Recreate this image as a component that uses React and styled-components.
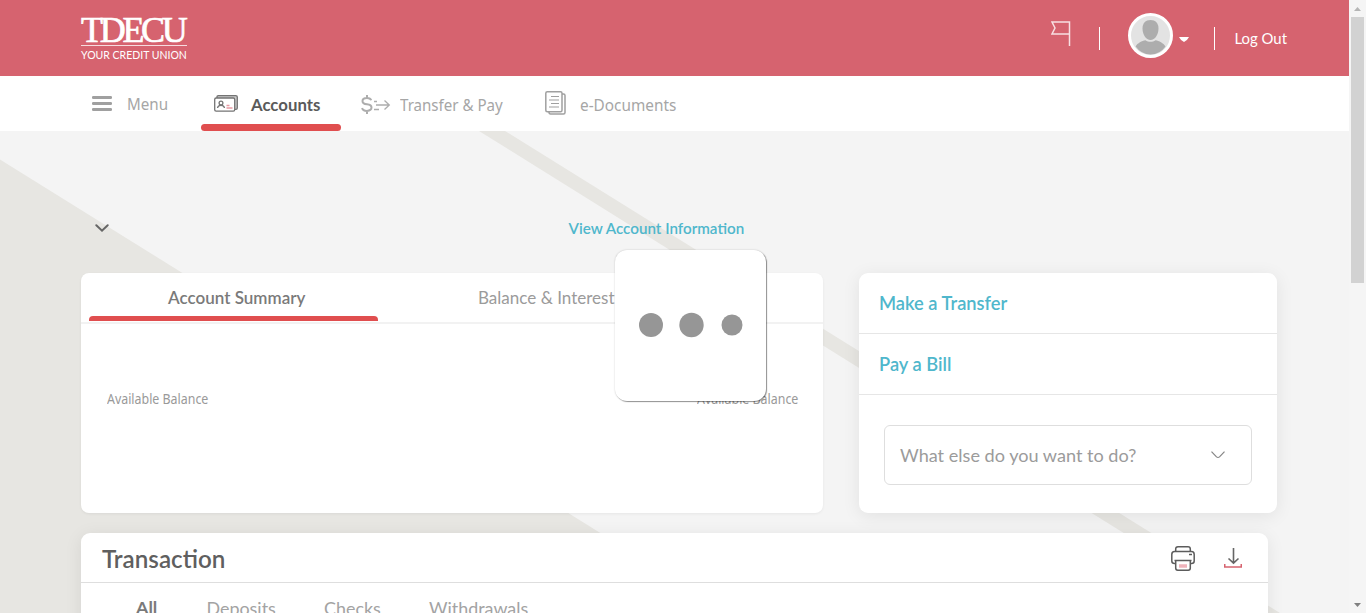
import React from 'react';
import styled, { createGlobalStyle } from 'styled-components';

const Global = createGlobalStyle`
  * { box-sizing: border-box; }
  html, body { margin: 0; height: 613px; overflow: hidden; }
  body { font-family: Lato, "Liberation Sans", sans-serif; color: #949494; background: #f4f4f4; }
  svg { display: block; flex: none; }
`;

const Screen = styled.div`display: flex; width: 1366px; height: 613px; overflow: hidden; background: #f4f4f4; position: relative;`;
const Page = styled.div`width: 1349px; height: 613px; overflow: hidden; position: relative; display: flex; flex-direction: column;`;
const Header = styled.header`height: 76px; flex: none; background: #d6636f; display: flex; justify-content: space-between; padding: 0 62px 0 81px; color: #fff;`;
const Logo = styled.div`width: 110px; padding-top: 13px;`;
const LogoMark = styled.div`
  font: 36px/34px "Liberation Serif", serif; height: 33px; letter-spacing: -3.3px; border-bottom: 1px solid #f6dcdf; width: 106px;
  display: flex; white-space: nowrap; -webkit-text-stroke: 0.7px #fff;
`;
const LogoText = styled.div`font-size: 10.5px; line-height: 13px; margin-top: 3px; white-space: nowrap;`;
const Tools = styled.div`display: flex; align-items: flex-start;`;
const Flag = styled.div`padding: 21px 28px 0 0;`;
const Rule = styled.div`width: 1px; height: 23px; margin-top: 27px; background: #fff;`;
const Avatar = styled.div`width: 45px; height: 45px; margin: 13px 6px 0 28px;`;
const Caret = styled.div`margin: 37px 25px 0 0;`;
const LogOut = styled.div`font-size: 14.9px; line-height: 20px; margin: 28px 0 0 19.5px; width: 52.5px; white-space: nowrap;`;

const Nav = styled.nav`height: 55px; flex: none; background: #fff; display: flex; padding-left: 92px;`;
const NavItem = styled.div`
  position: relative; display: flex; width: ${p => p.$w}px; height: 55px; padding-left: ${p => p.$pl || 0}px; color: ${p => (p.$active ? '#5a5a5a' : '#a6a6a6')};
  font: ${p => (p.$active ? 700 : 400)} ${p => p.$fs || 16.5}px/22px ${p => (p.$active ? 'Lato' : '"Noto Sans"')}, sans-serif;
`;
const NavIcon = styled.div`width: ${p => p.$w}px; padding-top: ${p => p.$top}px; flex: none;`;
const NavText = styled.span`margin-top: ${p => p.$top || 18}px; white-space: nowrap; transform-origin: 0 50%; transform: scaleX(${p => p.$sx || 1}); height: 22px;`;
const NavLine = styled.div`position: absolute; left: 0; bottom: 0; width: 140px; height: 7px; border-radius: 4px; background: #e04e4f;`;

const Content = styled.main`position: relative; flex: 1; overflow: hidden; padding-left: 81px;`;
const Backdrop = styled.svg`position: absolute; left: 0; top: 0;`;
const InfoRow = styled.div`position: relative; height: 142px; display: flex; padding: 86px 0 0 14px;`;
const InfoChevron = styled.div`width: 473.5px; padding-top: 7px;`;
const InfoLink = styled.a`font-size: 15.2px; font-weight: 600; line-height: 22px; color: #4fb7cc; white-space: nowrap;`;
const Cards = styled.div`position: relative; display: flex; gap: 36px; height: 240px;`;
const Summary = styled.section`width: 742px; background: #fff; border-radius: 8px; box-shadow: 0 1px 3px rgba(0,0,0,.06);`;
const Tabs = styled.div`display: flex; height: 51px; border-bottom: 2px solid #f2f2f2; padding-left: 8px;`;
const Tab = styled.div`
  width: ${p => p.$w}px; padding: 14px 0 0 ${p => p.$pl}px; display: flex; flex-direction: column; justify-content: space-between; font-size: 17.050px; line-height: 22px; font-weight: ${p => (p.$active ? 600 : 400)};
  color: ${p => (p.$active ? '#7a7a7a' : '#9b9b9b')}; white-space: nowrap;
`;
const TabLine = styled.div`height: 5px; margin: 0 0 1px -79px; width: 289px; border-radius: 4px 4px 0 0; background: #e04e4f;`;
const Balances = styled.div`display: flex; justify-content: space-between; padding: 64px 24px 0 26px; font: 14.5px/20px "Noto Sans", sans-serif; color: #999;`;
const BalanceLabel = styled.span`width: 102px; white-space: nowrap; transform-origin: 0 50%; transform: scaleX(.855);`;

const Actions = styled.aside`width: 418px; background: #fff; border-radius: 9px; box-shadow: 0 3px 18px rgba(0,0,0,.08);`;
const Action = styled.div`height: 61px; border-bottom: 1px solid #e6e6e6; padding: 18px 0 0 20px; font-size: 18.3px; line-height: 24px; font-weight: 600; color: #4fb7cc;`;
const Select = styled.div`
  margin: 30px 25px; height: 60px; border: 1px solid #dedede; border-radius: 6px; display: flex; align-items: center; justify-content: space-between;
  padding: 0 26px 0 15px; font-size: 18.1px; color: #9b9b9b;
`;
const Transactions = styled.section`position: relative; margin-top: 20px; width: 1187px; height: 200px; background: #fff; border-radius: 9px; box-shadow: 0 3px 18px rgba(0,0,0,.08);`;
const TransHead = styled.div`height: 50px; border-bottom: 1px solid #dedede; display: flex; align-items: flex-start; padding-left: 21px;`;
const Title = styled.h2`margin: 10px 0 0; font-size: 24.2px; line-height: 32px; font-weight: 600; color: #5f5f5f; width: 1069px;`;
const IconBox = styled.div`width: ${p => p.$w}px; padding-top: ${p => p.$top}px;`;
const Filters = styled.div`display: flex; padding: 13px 0 0 55px; font-size: 17.9px; line-height: 24px;`;
const Filter = styled.span`width: ${p => p.$w}px; white-space: nowrap; font-weight: ${p => (p.$active ? 700 : 400)}; color: ${p => (p.$active ? '#7a7a7a' : '#a3a3a3')}; margin-top: ${p => (p.$active ? -1 : 0)}px;`;

const Loader = styled.div`
  position: absolute; left: 615px; top: 250px; width: 151px; height: 151px; background: #fff; border-radius: 12px;
  box-shadow: 1px 1px 1px rgba(0,0,0,.4), 0 0 2px rgba(0,0,0,.2);
`;
const Scrollbar = styled.div`width: 17px; height: 613px; background: #f5f5f5; display: flex; flex-direction: column; align-items: center;`;
const Thumb = styled.div`width: 13px; height: 266px; background: #d2d2d2; margin-bottom: auto;`;
const Arrow = styled.div`height: 17px; padding-top: 7px; flex: none;`;

export default function App() {
  return (
    <Screen>
      <Global />
      <Page>
        <Header>
          <Logo>
            <LogoMark>TDECU</LogoMark>
            <LogoText>YOUR CREDIT UNION</LogoText>
          </Logo>
          <Tools>
            <Flag>
              <svg width="20" height="26" viewBox="0 0 20 26" fill="none" stroke="#f8dfe2" strokeWidth="1.500">
                <path d="M18.500 25V1H1L4 7 1 13h17.500" />
              </svg>
            </Flag>
            <Rule />
            <Avatar>
              <svg width="45" height="45" viewBox="0 0 45 45">
                <circle cx="22.5" cy="22.5" r="21" fill="#e3e3e3" stroke="#fff" strokeWidth="3" />
                <path d="M22.5 7c5 0 8 3.200 8 8.500 0 6-3.500 11.500-8 11.500s-8-5.500-8-11.500C14.500 10.200 17.500 7 22.500 7z" fill="#adadad" />
                <path d="M7.600 33.500C9.500 30 14 28 17.500 27.300c3 2 7 2 10 0 3.500.700 8 2.700 10 6.200A19 19 0 0 1 22.500 41.500a19 19 0 0 1-14.900-8z" fill="#adadad" />
              </svg>
            </Avatar>
            <Caret>
              <svg width="10" height="6" viewBox="0 0 10 6"><path d="M0 0h10Q9 2.500 5 5 1 2.500 0 0z" fill="#fff" /></svg>
            </Caret>
            <Rule />
            <LogOut>Log Out</LogOut>
          </Tools>
        </Header>
        <Nav>
          <NavItem $w={109}>
            <NavIcon $w={35} $top={20}>
              <svg width="20" height="15" stroke="#a0a0a0" strokeWidth="2.800" strokeLinecap="round"><path d="M1.300 1.500h17.400M1.300 7.500h17.400M1.300 13.500h17.400" /></svg>
            </NavIcon>
            <NavText $top={17} $sx={0.92}>Menu</NavText>
          </NavItem>
          <NavItem $w={160} $pl={13} $active $fs={16.8}>
            <NavIcon $w={37} $top={19}>
              <svg width="24" height="17" viewBox="0 0 24 17" fill="none" stroke="#747474" strokeWidth="1.300">
                <path d="M3 3V2Q3 .7 4.300.7h17.500Q23.300.7 23.300 2v11q0 1.300-1.300 1.300h-1" fill="#c9c9c9" />
                <rect x=".7" y="3" width="20" height="13.200" rx="1.400" fill="#fff" />
                <circle cx="7" cy="8" r="1.900" />
                <path d="M3.500 13q.5-2.600 3.500-2.600t3.500 2.600" />
                <path d="M12.500 10.500h3M12.500 13h6" stroke="#e79aa4" />
              </svg>
            </NavIcon>
            <NavText>Accounts</NavText>
            <NavLine />
          </NavItem>
          <NavItem $w={184}>
            <NavIcon $w={39} $top={19}>
              <svg width="30" height="19" viewBox="0 0 30 19" fill="none" stroke="#adadad" strokeWidth="1.500">
                <path d="M10.200 5.200Q9.500 3 6 3 1.500 3 1.500 6T6 9.300t4.500 3.300-4.500 3.300Q1.700 15.900 1.100 13M6 0v3M6 16v3" strokeWidth="2" />
                <path d="M13 6.500h3M15 10h13M13 14.500h5M23.500 5.500l4.800 4.500-4.800 4.500" strokeWidth="1.300" />
              </svg>
            </NavIcon>
            <NavText $sx={0.915}>Transfer &amp; Pay</NavText>
          </NavItem>
          <NavItem $w={160}>
            <NavIcon $w={35} $top={15}>
              <svg width="21" height="24" viewBox="0 0 21 24" fill="none" stroke="#a0a0a0" strokeWidth="1.500">
                <path d="M17 3h1.500Q20 3 20 4.500v17Q20 23 18.500 23H5.500Q4 23 4 21" />
                <rect x=".8" y=".8" width="16.200" height="20" rx="1.500" fill="#fff" />
                <path d="M6 5.500h8M4 9h10M6 12.500h8M4 16h10" strokeWidth="1.200" />
              </svg>
            </NavIcon>
            <NavText $sx={0.93}>e-Documents</NavText>
          </NavItem>
        </Nav>
        <Content>
          <Backdrop width="1349" height="482" fill="#e7e6e2">
            <path d="M0 28.500L729 482H0zM479 0h26l775 482h-28z" />
          </Backdrop>
          <InfoRow>
            <InfoChevron>
              <svg width="14" height="9" fill="none" stroke="#666" strokeWidth="2" strokeLinecap="round"><path d="M1.300 1.200L7 6.700l5.700-5.500" /></svg>
            </InfoChevron>
            <InfoLink>View Account Information</InfoLink>
          </InfoRow>
          <Cards>
            <Summary>
              <Tabs>
                <Tab $w={310} $pl={79} $active>Account Summary<TabLine /></Tab>
                <Tab $w={300} $pl={79}>Balance &amp; Interest</Tab>
              </Tabs>
              <Balances>
                <BalanceLabel>Available Balance</BalanceLabel>
                <BalanceLabel>Available Balance</BalanceLabel>
              </Balances>
            </Summary>
            <Actions>
              <Action>Make a Transfer</Action>
              <Action>Pay a Bill</Action>
              <Select>
                What else do you want to do?
                <svg width="14" height="8" fill="none" stroke="#858585" strokeWidth="1.200"><path d="M.5.7L5.500 5.900q1.500 1.200 3 0L13.500.7" /></svg>
              </Select>
            </Actions>
          </Cards>
          <Transactions>
            <TransHead>
              <Title>Transaction</Title>
              <IconBox $w={53} $top={13}>
                <svg width="24" height="25" viewBox="0 0 24 25" fill="none" stroke="#5c5c5c" strokeWidth="1.500">
                  <path d="M4.700 5.500V3Q4.700.8 7 .8h10q2.300 0 2.300 2.200v2.500" />
                  <path d="M4.700 17.500H3.500Q.8 17.500.8 15V8.500Q.8 5.500 3.500 5.500h17q2.700 0 2.700 3V15q0 2.500-2.700 2.500h-1.200M3.500 14.500h17M18 8.500h3" />
                  <path d="M4.700 14.500V22q0 2.200 2 2.200h10.600q2 0 2-2.200v-7.500" />
                  <path d="M8 20h8" stroke="#efb3bb" strokeWidth="3.500" />
                </svg>
              </IconBox>
              <IconBox $w={18} $top={15}>
                <svg width="18" height="20" viewBox="0 0 18 20" fill="none" stroke="#666" strokeWidth="1.600">
                  <path d="M9.500 0v15M4.500 10.500l5 4.700 5-4.700" /><path d="M.7 16v3h16.600v-3" stroke="#d6636f" />
                </svg>
              </IconBox>
            </TransHead>
            <Filters>
              <Filter $w={70.5} $active>All</Filter>
              <Filter $w={117.5}>Deposits</Filter>
              <Filter $w={105}>Checks</Filter>
              <Filter $w={110}>Withdrawals</Filter>
            </Filters>
          </Transactions>
        </Content>
      </Page>
      <Scrollbar>
        <Arrow><svg width="7" height="4"><path d="M0 4L3.500 0 7 4z" fill="#b5b5b5" /></svg></Arrow>
        <Thumb />
        <Arrow><svg width="7" height="4"><path d="M0 0L3.500 4 7 0z" fill="#808080" /></svg></Arrow>
      </Scrollbar>
      <Loader>
        <svg width="151" height="151" fill="#969696"><circle cx="36" cy="75" r="12" /><circle cx="76.500" cy="75" r="12.200" /><circle cx="117" cy="75" r="10.500" /></svg>
      </Loader>
    </Screen>
  );
}
